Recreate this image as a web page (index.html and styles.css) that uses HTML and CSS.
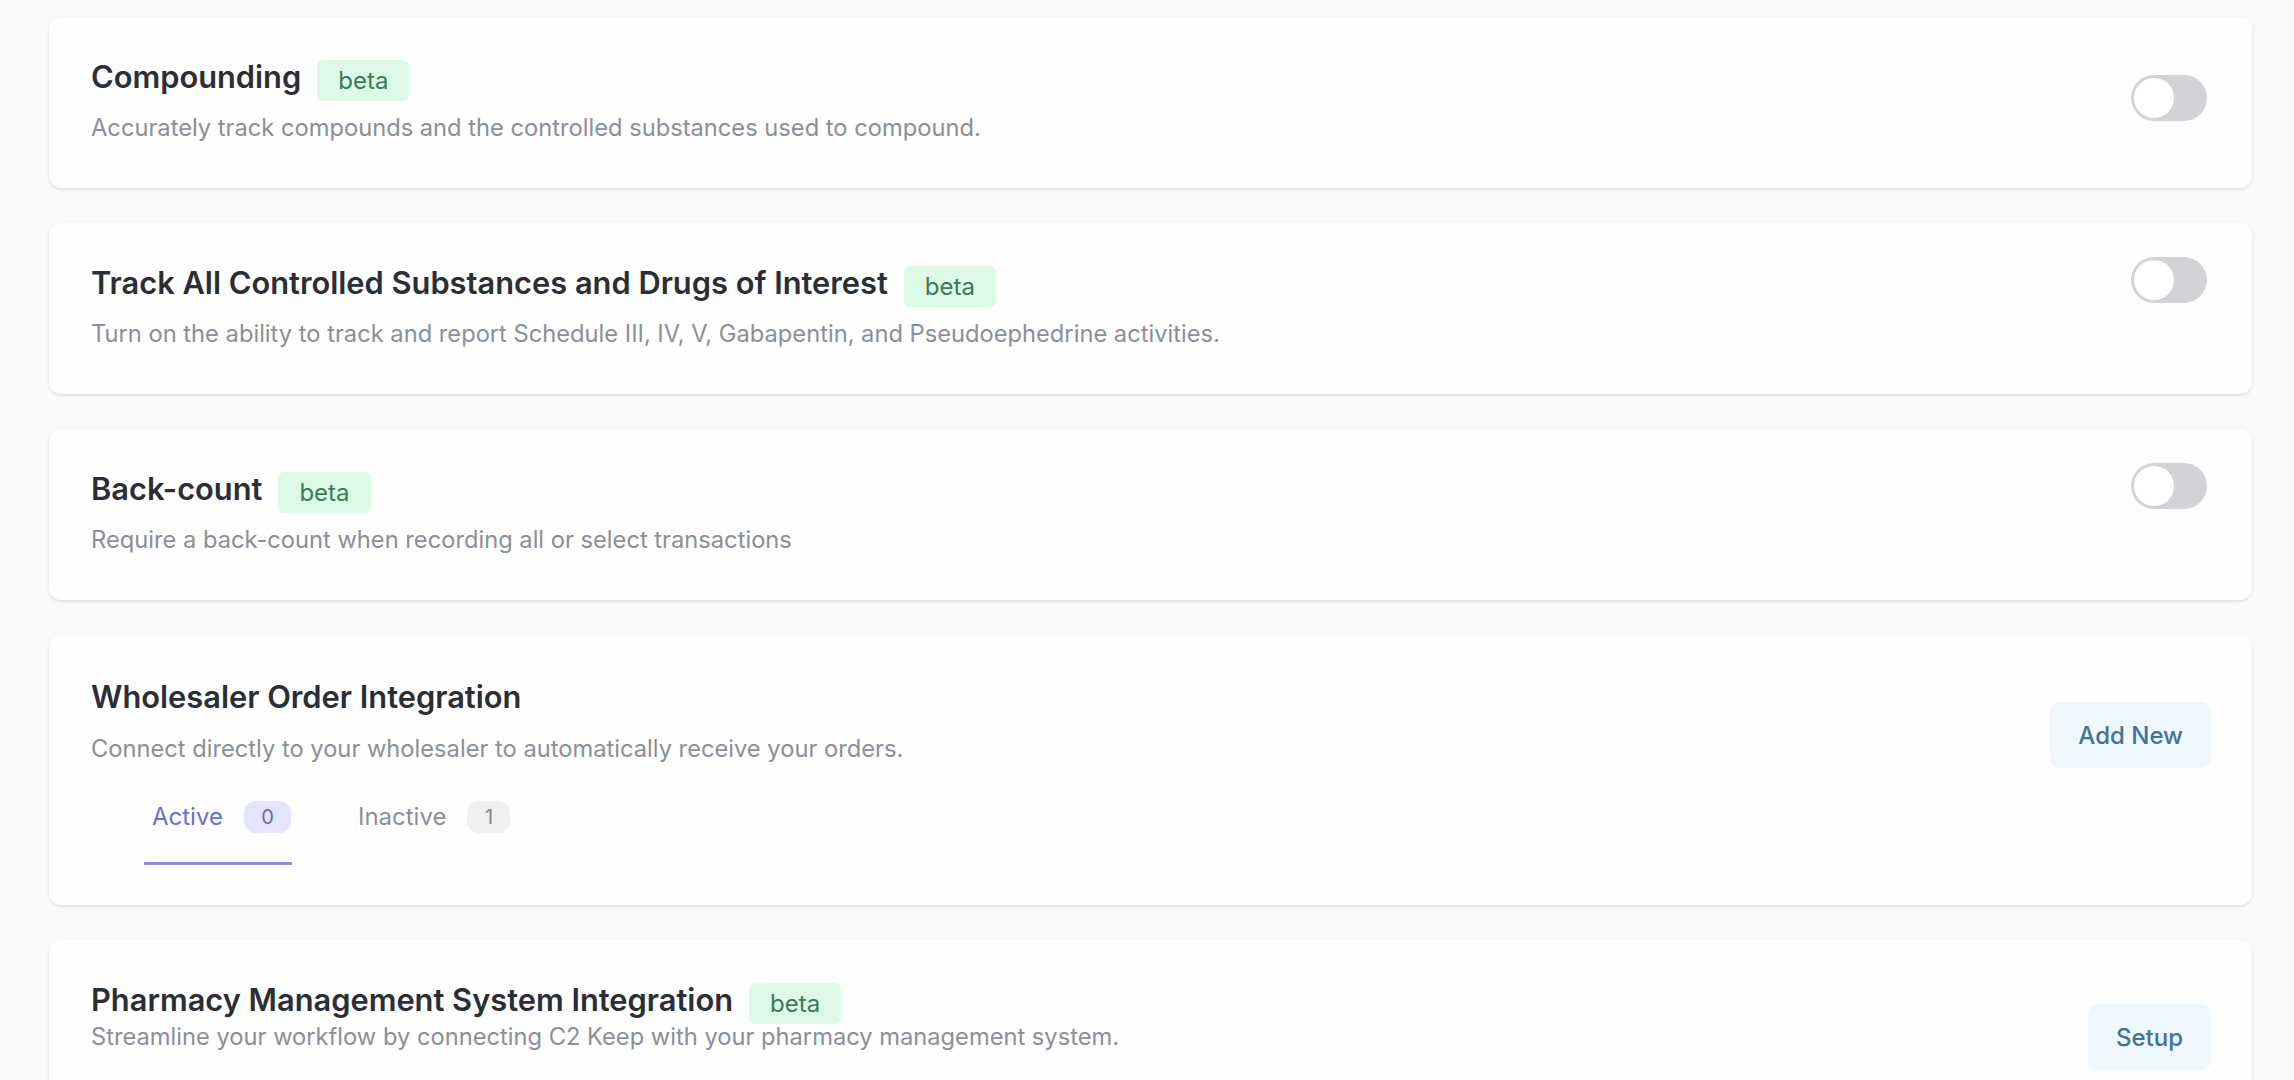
FILE: index.html
```html
<!DOCTYPE html>
<html lang="en">
<head>
    <meta charset="UTF-8">
    <meta name="viewport" content="width=device-width, initial-scale=1.0">
    <title>Settings</title>
    <link rel="stylesheet" href="styles.css">
</head>
<body>
    <main class="settings">
        <section class="card">
            <div class="card-body">
                <div class="card-head">
                    <h2 class="card-title">Compounding</h2>
                    <span class="badge">beta</span>
                </div>
                <p class="card-desc">Accurately track compounds and the controlled substances used to compound.</p>
            </div>
            <button class="switch switch-low" aria-label="Toggle compounding"><span class="knob"></span></button>
        </section>

        <section class="card">
            <div class="card-body">
                <div class="card-head">
                    <h2 class="card-title">Track All Controlled Substances and Drugs of Interest</h2>
                    <span class="badge">beta</span>
                </div>
                <p class="card-desc">Turn on the ability to track and report Schedule III, IV, V, Gabapentin, and Pseudoephedrine activities.</p>
            </div>
            <button class="switch" aria-label="Toggle tracking"><span class="knob"></span></button>
        </section>

        <section class="card">
            <div class="card-body">
                <div class="card-head">
                    <h2 class="card-title">Back-count</h2>
                    <span class="badge">beta</span>
                </div>
                <p class="card-desc">Require a back-count when recording all or select transactions</p>
            </div>
            <button class="switch" aria-label="Toggle back-count"><span class="knob"></span></button>
        </section>

        <section class="card card-tabs">
            <div class="card-body">
                <div class="card-head">
                    <h2 class="card-title">Wholesaler Order Integration</h2>
                </div>
                <p class="card-desc">Connect directly to your wholesaler to automatically receive your orders.</p>
                <div class="tabs">
                    <div class="tab active">Active <span class="count">0</span></div>
                    <div class="tab">Inactive <span class="count">1</span></div>
                </div>
            </div>
            <button class="action">Add New</button>
        </section>

        <section class="card card-pms">
            <div class="card-body">
                <div class="card-head">
                    <h2 class="card-title">Pharmacy Management System Integration</h2>
                    <span class="badge">beta</span>
                </div>
                <p class="card-desc">Streamline your workflow by connecting C2 Keep with your pharmacy management system.</p>
            </div>
            <button class="action action-setup">Setup</button>
        </section>
    </main>
</body>
</html>
```

FILE: styles.css
```css
body {
    margin: 0;
    font-family: Inter, "Noto Sans", sans-serif;
    background-color: #fafafa;
    color: #2a2e37;
    overflow: hidden;
}

.settings {
    display: flex;
    flex-direction: column;
    gap: 35px;
    padding: 17px 42px 0 49px;
}

.card {
    display: flex;
    justify-content: space-between;
    align-items: flex-start;
    background-color: #fefefe;
    border-radius: 12px;
    padding: 39px 41px 44px 42px;
    box-shadow: 0 2px 3px rgba(0, 0, 0, 0.09), 0 0 4px rgba(0, 0, 0, 0.03);
}

.card-head {
    display: flex;
    align-items: flex-start;
    gap: 16px;
    height: 45px;
}

.card-title {
    margin: 0;
    font-size: 30.8px;
    font-weight: 600;
    line-height: 41px;
    color: #2a2e37;
}

.badge {
    margin-top: 4px;
    padding: 0 21px;
    border-radius: 6px;
    background-color: #dcfae6;
    color: #3a7a55;
    font-size: 24px;
    line-height: 41px;
}

.card-desc {
    margin: 11px 0 0;
    font-size: 23.7px;
    line-height: 32px;
    color: #8b8f97;
}

/* toggle switch, off state */
.switch {
    position: relative;
    width: 76px;
    height: 46px;
    margin: -5px 4px 0 0;
    padding: 0;
    border: none;
    border-radius: 23px;
    background-color: #d3d3d7;
    cursor: pointer;
}

.switch-low {
    margin-top: 19px;
}

.knob {
    position: absolute;
    left: 3px;
    top: 3px;
    width: 40px;
    height: 40px;
    border-radius: 50%;
    background-color: #ffffff;
}

.card-tabs {
    padding-bottom: 40px;
}

.card-tabs .card-head {
    height: 48px;
}

.card-tabs .card-title {
    margin-top: 2px;
}

.tabs {
    display: flex;
    gap: 58px;
    margin: 36px 0 0 53px;
}

.tab {
    display: flex;
    align-items: center;
    gap: 21px;
    padding: 0 1px 29px 8px;
    font-size: 24px;
    line-height: 32px;
    color: #8b8f97;
    border-bottom: 3px solid transparent;
}

.tab.active {
    color: #6a6dd2;
    border-bottom-color: #8e91dc;
}

.count {
    display: inline-block;
    min-width: 43px;
    height: 32px;
    line-height: 32px;
    text-align: center;
    border-radius: 12px;
    font-size: 20px;
    background-color: #f0f0f0;
    color: #83868d;
}

.tab.active .count {
    min-width: 47px;
    background-color: #e2e5fb;
    color: #6466c9;
}

.action {
    margin-top: 28px;
    height: 66px;
    padding: 0 28px;
    border: none;
    border-radius: 10px;
    background-color: #edf7fc;
    color: #42729a;
    font-family: Inter, "Noto Sans", sans-serif;
    font-size: 24px;
    font-weight: 500;
    cursor: pointer;
}

.card-pms .card-desc {
    margin-top: -3px;
}

.action-setup {
    margin-top: 25px;
    padding: 0 28px;
}
```
